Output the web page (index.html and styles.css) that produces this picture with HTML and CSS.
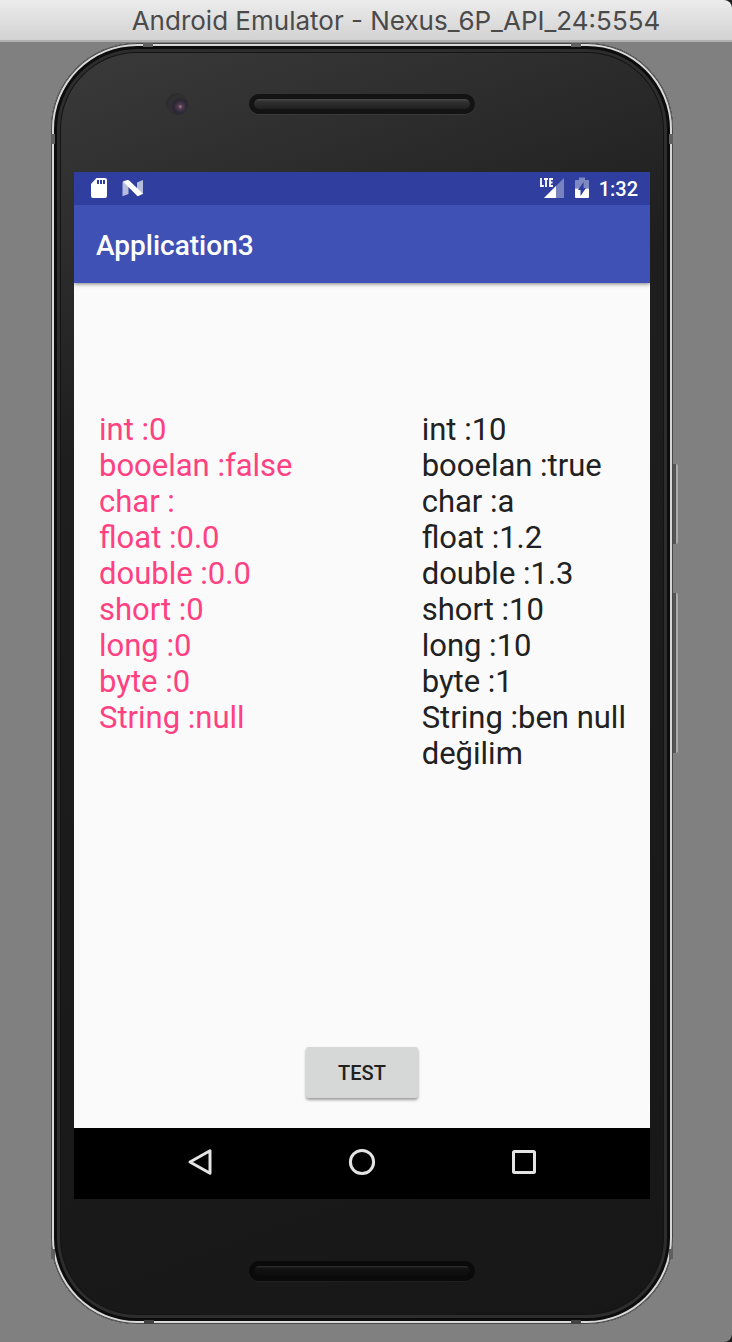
FILE: index.html
```html
<!DOCTYPE html>
<html lang="en">
<head>
<meta charset="utf-8">
<title>Android Emulator - Nexus_6P_API_24:5554</title>
<link rel="stylesheet" href="styles.css">
</head>
<body>
<header class="titlebar"><h1 class="window-title">Android Emulator - Nexus_6P_API_24:5554</h1></header>
<main class="desk">
  <div class="phone">
    <span class="band band-top-left"></span>
    <span class="band band-top-right"></span>
    <span class="band band-bottom-left"></span>
    <span class="band band-bottom-right"></span>
    <span class="band band-left-upper"></span>
    <span class="band band-right-upper"></span>
    <span class="band band-left-lower"></span>
    <span class="band band-right-lower"></span>
    <span class="side-key power"></span>
    <span class="side-key volume"></span>
    <div class="bezel top">
      <span class="camera"></span>
      <span class="speaker"></span>
    </div>
    <div class="screen">
      <div class="statusbar">
        <svg class="sd" width="18" height="22" viewBox="0 0 18 22"><path d="M6.500 1H15Q17 1 17 3V19Q17 21 15 21H3Q1 21 1 19V7Z" fill="#fff"/><path d="M7 3h2v4H7zM10 3h2v4h-2zM13 3h2v4h-2z" fill="#303f9f"/></svg>
        <svg class="nougat" width="22" height="18" viewBox="0 0 22 18"><path d="M0.500 3L3.500 1.500L6.500 6V15L0.500 17.200ZM15 3.500L21 1V15.500L15 11Z" fill="#fff" opacity=".65"/><path d="M1 2.600L5.500 1Q6.500 .8 7.200 1.500L21 14.800L16.500 17Q15.500 17.400 14.800 16.600Z" fill="#fff"/></svg>
        <span class="spacer"></span>
        <svg class="signal" width="26" height="22" viewBox="0 0 26 22"><path d="M25 1V21H5Z" fill="#fff" opacity=".35"/><path d="M17 9V21H5Z" fill="#fff"/><path d="M2 1V9H5M5 2H9M7 2V10M14 2H11V9H14M11 5.500H13.500" fill="none" stroke="#303f9f" stroke-width="4"/><path d="M2 1V9H4.800M5 2H9M7 1.500V10M14 2H11V9H14M11 5.500H13.500" fill="none" stroke="#fff" stroke-width="1.800"/></svg>
        <svg class="battery" width="14" height="22" viewBox="0 0 14 22"><path d="M4 0.500H10V3H13Q14 3 14 4V11.500H0V4Q0 3 1 3H4Z" fill="#fff" opacity=".38"/><path d="M0 11.500H14V20Q14 21 13 21H1Q0 21 0 20Z" fill="#fff"/><path d="M8.600 5V11H11L5.500 19V13H3Z" fill="#303f9f"/></svg>
        <time class="clock">1:32</time>
      </div>
      <header class="appbar"><h2 class="app-title">Application3</h2></header>
      <section class="content">
        <div class="columns">
          <p class="defaults">int :0<br>booelan :false<br>char :<br>float :0.0<br>double :0.0<br>short :0<br>long :0<br>byte :0<br>String :null</p>
          <p class="values" lang="tr">int :10<br>booelan :true<br>char :a<br>float :1.2<br>double :1.3<br>short :10<br>long :10<br>byte :1<br>String :ben null değilim</p>
        </div>
        <button class="test" type="button">TEST</button>
      </section>
      <nav class="navbar">
        <button class="nav-key" type="button" aria-label="Back"><svg width="28" height="28" viewBox="0 0 28 28"><path d="M4 14L24 2.800V25.200Z"/></svg></button>
        <button class="nav-key" type="button" aria-label="Home"><svg width="28" height="28" viewBox="0 0 28 28"><circle cx="14" cy="14" r="11.600"/></svg></button>
        <button class="nav-key" type="button" aria-label="Overview"><svg width="28" height="28" viewBox="0 0 28 28"><rect x="3.500" y="3.500" width="21" height="21" rx="1"/></svg></button>
      </nav>
    </div>
    <div class="bezel bottom"><span class="speaker low"></span></div>
  </div>
</main>
</body>
</html>
```
FILE: styles.css
```css
* { box-sizing: border-box; }
html { background: #1c1c1c; }
body {
  margin: 0;
  min-height: 100vh;
  display: flex;
  flex-direction: column;
  background: #808080;
  border-radius: 0 8px 8px 0;
  font-family: Roboto, "Noto Sans", sans-serif;
}
h1, h2, p { margin: 0; font-weight: 400; }
.titlebar {
  height: 42px;
  padding: 2px 0 0 60px;
  display: flex;
  align-items: center;
  justify-content: center;
  background: linear-gradient(#ececec, #d2d2d2);
  border-bottom: 2px solid #b0b0b0;
  border-radius: 0 8px 0 0;
}
.window-title {
  font: 400 26px/32px Inter, "Open Sans", sans-serif;
  color: #4a4a4a;
  white-space: nowrap;
}
.desk {
  flex: 1;
  display: flex;
  justify-content: center;
  padding: 1px 59px 18px 51px;
}
.phone {
  position: relative;
  flex: 1;
  max-width: 622px;
  padding: 0 23px;
  display: flex;
  flex-direction: column;
  border-radius: 86px;
  background: linear-gradient(160deg, #3b3b3b 0, #1e1e1e 28%, #171717 100%);
  box-shadow:
    inset 0 0 0 1px #484848,
    inset 0 0 0 3px #d8d8d8,
    inset 0 0 0 6px #0c0c0c,
    inset 0 0 0 9px #2d2d2d,
    inset 0 0 0 10px #141414;
}
.band { position: absolute; background: #606060; }
.band-top-left, .band-top-right, .band-bottom-left, .band-bottom-right { width: 10px; height: 4px; }
.band-left-upper, .band-right-upper, .band-left-lower, .band-right-lower { width: 4px; height: 10px; }
.band-top-left { top: 0; left: 92px; }
.band-top-right { top: 0; right: 92px; }
.band-bottom-left { bottom: 0; left: 93px; background: #424242; }
.band-bottom-right { bottom: 0; right: 92px; background: #424242; }
.band-left-upper { left: 0; top: 91px; }
.band-right-upper { right: 0; top: 91px; }
.band-left-lower { left: 0; bottom: 65px; }
.band-right-lower { right: 0; bottom: 65px; }
.side-key {
  position: absolute;
  left: 100%;
  width: 5px;
  background: linear-gradient(90deg, #555 55%, #aaa 55%);
  border-radius: 0 2px 2px 0;
}
.power { top: 421px; height: 80px; }
.volume { top: 550px; height: 160px; }
.bezel { position: relative; display: flex; justify-content: center; }
.top { height: 129px; padding-top: 51px; }
.bottom { height: 125px; padding-top: 62px; }
.camera {
  position: absolute;
  left: 92px;
  top: 50px;
  width: 22px;
  height: 22px;
  border-radius: 50%;
  background: radial-gradient(circle at 65% 62%, #b07a78 0, #4a3a50 12%, #2b2633 34%, #303030 50%, #292929 100%);
}
.speaker {
  width: 226px;
  height: 20px;
  border: 5px solid #131313;
  border-radius: 10px;
  background: linear-gradient(#4a4a4a 0, #303030 30%, #202020 100%);
  box-shadow: 0 1px 0 #3a3a3a;
}
.low { border-color: #0a0a0a; background: linear-gradient(#303030 0, #121212 25%, #0c0c0c 100%); box-shadow: 0 1px 0 #202020; }
.screen { flex: 1; display: flex; flex-direction: column; background: #fafafa; }
.statusbar {
  height: 33px;
  padding: 0 12px 0 16px;
  display: flex;
  align-items: center;
  background: #303f9f;
  color: #fff;
}
.statusbar svg { margin-bottom: 2px; }
.nougat { margin-left: 14px; }
.spacer { flex: 1; }
.battery { margin: 0 10px; }
.clock { font-size: 20px; font-weight: 500; line-height: 24px; }
.appbar {
  height: 78px;
  padding: 3px 22px 0;
  display: flex;
  align-items: center;
  background: #3f51b5;
  box-shadow: 0 1px 4px rgba(0, 0, 0, .5);
  clip-path: inset(0 0 -8px 0);
}
.app-title { color: #fff; font-size: 28px; font-weight: 500; line-height: 36px; }
.content {
  flex: 1;
  padding: 129px 22px 30px;
  display: flex;
  flex-direction: column;
  align-items: center;
  justify-content: space-between;
}
.columns {
  align-self: stretch;
  padding-left: 3px;
  display: grid;
  grid-template-columns: 61% 39%;
  font-size: 31px;
  line-height: 36px;
}
.defaults { color: #ff4081; }
.values { color: #212121; }
.test {
  width: 112px;
  height: 51px;
  border: 0;
  border-radius: 3px;
  background: #d6d7d7;
  color: #212121;
  font: 500 20px/24px Roboto, sans-serif;
  box-shadow: 0 2px 3px rgba(0, 0, 0, .38);
}
.navbar {
  height: 71px;
  padding: 0 45px;
  display: grid;
  grid-template-columns: repeat(3, 1fr);
  place-items: center;
  background: #000;
}
.nav-key { display: flex; padding: 0 0 4px; border: 0; background: none; }
.nav-key svg { fill: none; stroke: #e4e4e4; stroke-width: 3; stroke-linejoin: round; }
```
